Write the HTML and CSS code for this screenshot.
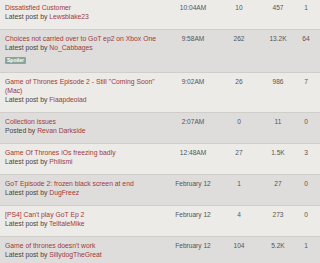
FILE: index.html
```html
<!DOCTYPE html>
<html lang="en">
<head>
    <meta charset="UTF-8">
    <meta name="viewport" content="width=device-width, initial-scale=1.0">
    <title>Forum Topics</title>
    <link rel="stylesheet" href="styles.css">
</head>
<body>

    <!-- Topic list -->
    <div class="topics">
        <div class="topic">
            <div class="info">
                <a href="#" class="title">Dissatisfied Customer</a>
                <div class="meta">Latest post by <a href="#">Lewsblake23</a></div>
            </div>
            <div class="num">10:04AM</div>
            <div class="num">10</div>
            <div class="num">457</div>
            <div class="num">1</div>
        </div>

        <div class="topic alt">
            <div class="info">
                <a href="#" class="title">Choices not carried over to GoT ep2 on Xbox One</a>
                <div class="meta">Latest post by <a href="#">No_Cabbages</a></div>
                <span class="badge">Spoiler</span>
            </div>
            <div class="num">9:58AM</div>
            <div class="num">262</div>
            <div class="num">13.2K</div>
            <div class="num">64</div>
        </div>

        <div class="topic">
            <div class="info">
                <a href="#" class="title">Game of Thrones Episode 2 - Still "Coming Soon" (Mac)</a>
                <div class="meta">Latest post by <a href="#">Fiaapdeoiad</a></div>
            </div>
            <div class="num">9:02AM</div>
            <div class="num">26</div>
            <div class="num">986</div>
            <div class="num">7</div>
        </div>

        <div class="topic alt">
            <div class="info">
                <a href="#" class="title">Collection issues</a>
                <div class="meta">Posted by <a href="#">Revan Darkside</a></div>
            </div>
            <div class="num">2:07AM</div>
            <div class="num">0</div>
            <div class="num">11</div>
            <div class="num">0</div>
        </div>

        <div class="topic">
            <div class="info">
                <a href="#" class="title">Game Of Thrones iOs freezing badly</a>
                <div class="meta">Latest post by <a href="#">Philismi</a></div>
            </div>
            <div class="num">12:48AM</div>
            <div class="num">27</div>
            <div class="num">1.5K</div>
            <div class="num">3</div>
        </div>

        <div class="topic alt">
            <div class="info">
                <a href="#" class="title">GoT Episode 2: frozen black screen at end</a>
                <div class="meta">Latest post by <a href="#">DugFreez</a></div>
            </div>
            <div class="num">February 12</div>
            <div class="num">1</div>
            <div class="num">27</div>
            <div class="num">0</div>
        </div>

        <div class="topic">
            <div class="info">
                <a href="#" class="title">[PS4] Can't play GoT Ep 2</a>
                <div class="meta">Latest post by <a href="#">TelltaleMike</a></div>
            </div>
            <div class="num">February 12</div>
            <div class="num">4</div>
            <div class="num">273</div>
            <div class="num">0</div>
        </div>

        <div class="topic alt">
            <div class="info">
                <a href="#" class="title">Game of thrones doesn't work</a>
                <div class="meta">Latest post by <a href="#">SillydogTheGreat</a></div>
            </div>
            <div class="num">February 12</div>
            <div class="num">104</div>
            <div class="num">5.2K</div>
            <div class="num">1</div>
        </div>
    </div>

</body>
</html>
```

FILE: styles.css
```css
body {
    margin: 0;
    padding: 0;
    font-family: "Liberation Sans", Arial, sans-serif;
    background: #dedddb;
    color: #444;
}

/* Topic list */
.topics {
    margin-top: -1px;
}

.topic {
    display: grid;
    grid-template-columns: 1fr 50px 42px 36px 20px;
    padding: 4px 4px 8px 5px;
    background: #edebe7;
    border-bottom: 1px solid #cfcecb;
    font-size: 6.8px;
    line-height: 9px;
}
.topic.alt { background: #dedddb; }

.info a {
    color: #a03a3c;
    text-decoration: none;
}
.title { display: block; }
.meta { color: #444; }

.badge {
    display: inline-block;
    margin: 5px 0 -2px;
    padding: 0 2px;
    height: 7px;
    line-height: 7px;
    background: #8da597;
    color: white;
    font-size: 5px;
    font-weight: bold;
    border-radius: 1px;
}

.num {
    text-align: center;
    color: #555;
    font-size: 6.6px;
}
```
